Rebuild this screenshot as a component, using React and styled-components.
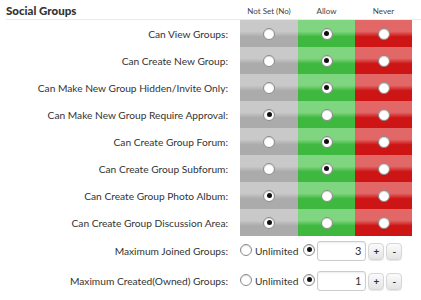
import React from "react";
import styled, { createGlobalStyle } from "styled-components";

const GlobalStyle = createGlobalStyle`
  body {
    margin: 0;
    background: #fff;
    font-family: Lato, "Noto Sans", sans-serif;
    color: #333;
  }
`;

const permissions = [
  { label: "Can View Groups:", value: "allow" },
  { label: "Can Create New Group:", value: "allow" },
  { label: "Can Make New Group Hidden/Invite Only:", value: "allow" },
  { label: "Can Make New Group Require Approval:", value: "notset" },
  { label: "Can Create Group Forum:", value: "allow" },
  { label: "Can Create Group Subforum:", value: "allow" },
  { label: "Can Create Group Photo Album:", value: "notset" },
  { label: "Can Create Group Discussion Area:", value: "notset" },
];

const limits = [
  { label: "Maximum Joined Groups:", value: 3 },
  { label: "Maximum Created(Owned) Groups:", value: 1 },
];

const shades = {
  notset: ["#c9c9c9", "#ababab"],
  allow: ["#80d680", "#3fb83f"],
  never: ["#e26767", "#cd1515"],
};

export default function App() {
  return (
    <>
      <GlobalStyle />
      <Container>
        <HeaderRow>
          <Title>Social Groups</Title>
          <ColHead>Not Set (No)</ColHead>
          <ColHead>Allow</ColHead>
          <ColHead>Never</ColHead>
        </HeaderRow>
        {permissions.map((p) => (
          <PermRow key={p.label}>
            <Label>{p.label}</Label>
            {["notset", "allow", "never"].map((kind) => (
              <Cell key={kind} kind={kind}>
                <Radio checked={p.value === kind} />
              </Cell>
            ))}
          </PermRow>
        ))}
        {limits.map((l) => (
          <LimitRow key={l.label}>
            <Label>{l.label}</Label>
            <Controls>
              <Option>
                <Radio />
                <span>Unlimited</span>
              </Option>
              <Radio checked />
              <NumberBox>{l.value}</NumberBox>
              <StepButton>+</StepButton>
              <StepButton>-</StepButton>
            </Controls>
          </LimitRow>
        ))}
      </Container>
    </>
  );
}

const Container = styled.div`
  width: 421px;
  height: 300px;
  padding: 0 9px 0 6px;
  box-sizing: border-box;
  overflow: hidden;
`;

const HeaderRow = styled.div`
  display: grid;
  grid-template-columns: 1fr 58px 57px 57px;
  align-items: center;
  height: 20px;
  padding-top: 2px;
  box-sizing: border-box;
  border-bottom: 1px solid #e4ebf2;
  margin-right: -9px;
  padding-right: 9px;
`;

const Title = styled.h3`
  margin: 0;
  font-size: 11.5px;
  font-weight: 900;
  color: #333;
`;

const ColHead = styled.div`
  font-size: 8px;
  text-align: center;
  color: #444;
`;

const PermRow = styled.div`
  display: grid;
  grid-template-columns: 1fr 58px 57px 57px;
  height: 27px;
`;

const Label = styled.div`
  display: flex;
  align-items: center;
  justify-content: flex-end;
  padding-right: 12px;
  font-size: 10.2px;
  color: #333;
  white-space: nowrap;
`;

const Cell = styled.div`
  display: flex;
  align-items: center;
  justify-content: center;
  background: linear-gradient(
    to bottom,
    ${(p) => shades[p.kind][0]} 0%,
    ${(p) => shades[p.kind][0]} 42%,
    ${(p) => shades[p.kind][1]} 62%,
    ${(p) => shades[p.kind][1]} 100%
  );
`;

const Radio = styled.span`
  position: relative;
  flex: none;
  width: 10px;
  height: 10px;
  border-radius: 50%;
  background: #fff;
  border: 1px solid #8a8a8a;
  box-shadow: inset 0 1px 1px rgba(0, 0, 0, 0.15);
  &::after {
    content: "";
    display: ${(p) => (p.checked ? "block" : "none")};
    position: absolute;
    top: 2.5px;
    left: 2.5px;
    width: 5px;
    height: 5px;
    border-radius: 50%;
    background: #111;
  }
`;

const LimitRow = styled.div`
  display: grid;
  grid-template-columns: 1fr 172px;
  height: 30px;
`;

const Controls = styled.div`
  display: flex;
  align-items: center;
  font-size: 10.2px;
  ${Radio} {
    margin-top: -3px;
  }
`;

const Option = styled.label`
  display: flex;
  align-items: center;
  gap: 3px;
  margin-right: 5px;
  color: #333;
`;

const NumberBox = styled.div`
  width: 49px;
  height: 20px;
  margin-left: 2px;
  box-sizing: border-box;
  border: 1px solid #ccc;
  border-radius: 3px;
  text-align: right;
  padding-right: 4px;
  line-height: 18px;
  font-size: 11px;
  box-shadow: inset 0 1px 2px rgba(0, 0, 0, 0.08);
`;

const StepButton = styled.button`
  width: 16px;
  height: 17px;
  margin-left: 2px;
  padding: 0;
  border: 1px solid #d6d6d6;
  border-radius: 4px;
  background: linear-gradient(to bottom, #fbfbfb, #e4e4e4);
  font-family: inherit;
  font-size: 10px;
  font-weight: bold;
  color: #333;
  box-shadow: 0 1px 1px rgba(0, 0, 0, 0.1);
`;
